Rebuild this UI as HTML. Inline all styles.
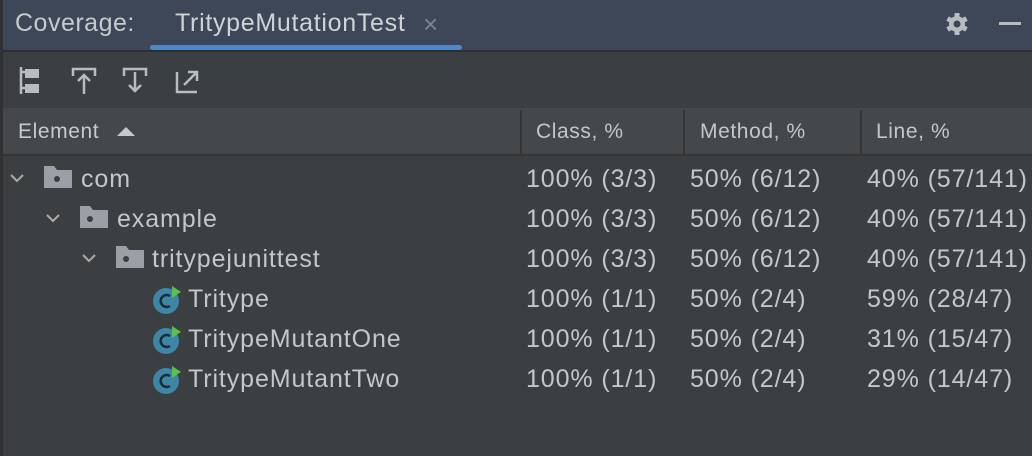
<!DOCTYPE html>
<html><head><style>
*{margin:0;padding:0;box-sizing:border-box}
body{width:1032px;height:456px;background:#3c3f41;font-family:"Liberation Sans",sans-serif;color:#c4c7c9;position:relative;overflow:hidden}
.top{position:absolute;left:0;top:0;width:1032px;height:50px;background:#3d4758}
.abs{position:absolute;white-space:nowrap}
.tb{position:absolute;left:0;top:52px;width:1032px;height:56px;background:#3c3f41}
.hd{position:absolute;left:0;top:108px;width:1032px;height:48px;background:#45484a;border-bottom:2px solid #343638}
.sep{position:absolute;top:110px;width:2px;height:44px;background:#323436}
.row{position:absolute;left:0;height:40px;width:1032px;font-size:25px;letter-spacing:0.9px;line-height:40px}
.row span{position:absolute}
.lb{position:absolute;left:0;top:0;width:3px;height:456px;background:#2f3133}
.h{font-size:21px;letter-spacing:0.6px}
</style></head><body>
<div class="top"></div>
<div class="abs" style="left:15px;top:9px;font-size:25px;letter-spacing:0.5px;color:#c7cacd">Coverage:</div>
<div class="abs" style="left:175px;top:9px;font-size:25px;letter-spacing:0.7px;color:#d0d3d6">TritypeMutationTest</div>
<div class="abs" style="left:423px;top:9px;font-size:26px;color:#7c8390">×</div>
<div class="abs" style="left:150px;top:45px;width:312px;height:5px;border-radius:3px;background:#4d88c9"></div>
<div class="abs" style="left:0;top:50px;width:1032px;height:2px;background:#2d2f31"></div>
<svg class="abs" style="left:944px;top:11px" width="26" height="26" viewBox="0 0 26 26"><g fill="#b8bcc0"><circle cx="13" cy="13" r="8"/><g stroke="#b8bcc0" stroke-width="5"><line x1="13" y1="2" x2="13" y2="24"/><line x1="3.5" y1="7.5" x2="22.5" y2="18.5"/><line x1="3.5" y1="18.5" x2="22.5" y2="7.5"/></g></g><circle cx="13" cy="13" r="3.5" fill="#3d4758"/></svg>
<div class="abs" style="left:999px;top:22px;width:22px;height:3px;background:#b8bcc0"></div>
<div class="tb"></div>
<svg class="abs" style="left:18px;top:66px" width="190" height="30" viewBox="0 0 190 30" fill="none" stroke="#b8bcc0" stroke-width="2.5">
<line x1="3" y1="1" x2="3" y2="28"/><path d="M3 6h6M3 22h6" /><rect x="7" y="3" width="14" height="9" fill="#b8bcc0" stroke="none"/><rect x="7" y="18" width="14" height="9" fill="#b8bcc0" stroke="none"/>
<path d="M55 10V3h22v7M66 28V9M60 15l6-6 6 6"/>
<path d="M106 10V3h22v7M117 6v19M111 19l6 6 6-6"/>
<path d="M159 6v20h20M166 19l12-12M170 6h9v9"/>
</svg>
<div class="hd"></div>
<div class="sep" style="left:520px"></div><div class="sep" style="left:683px"></div><div class="sep" style="left:860px"></div>
<div class="abs h" style="left:18px;top:120px;color:#c7cacd">Element</div>
<svg class="abs" style="left:117px;top:125px" width="18" height="12"><path d="M0 11L9 2L18 11Z" fill="#c7cacd"/></svg>
<div class="abs h" style="left:536px;top:120px">Class, %</div>
<div class="abs h" style="left:700px;top:120px">Method, %</div>
<div class="abs h" style="left:876px;top:120px">Line, %</div>

<div class="row" style="top:159px"><svg style="position:absolute;left:9px;top:14px" width="16" height="12"><path d="M2 2l6 6 6-6" stroke="#aaa" stroke-width="2" fill="none"/></svg><svg style="position:absolute;left:44px;top:7px" width="28" height="22"><path d="M0 0h10l3 4h15v18H0z" fill="#9aa0a6"/><circle cx="13" cy="13" r="3" fill="#3c3f41"/></svg><span style="left:81px">com</span><span style="left:526px">100% (3/3)</span><span style="left:690px">50% (6/12)</span><span style="left:867px">40% (57/141)</span></div>
<div class="row" style="top:199px"><svg style="position:absolute;left:45px;top:14px" width="16" height="12"><path d="M2 2l6 6 6-6" stroke="#aaa" stroke-width="2" fill="none"/></svg><svg style="position:absolute;left:80px;top:7px" width="28" height="22"><path d="M0 0h10l3 4h15v18H0z" fill="#9aa0a6"/><circle cx="10" cy="13" r="3" fill="#3c3f41"/></svg><span style="left:117px">example</span><span style="left:526px">100% (3/3)</span><span style="left:690px">50% (6/12)</span><span style="left:867px">40% (57/141)</span></div>
<div class="row" style="top:239px"><svg style="position:absolute;left:81px;top:14px" width="16" height="12"><path d="M2 2l6 6 6-6" stroke="#aaa" stroke-width="2" fill="none"/></svg><svg style="position:absolute;left:116px;top:7px" width="28" height="22"><path d="M0 0h10l3 4h15v18H0z" fill="#9aa0a6"/><circle cx="10" cy="13" r="3" fill="#3c3f41"/></svg><span style="left:152px">tritypejunittest</span><span style="left:526px">100% (3/3)</span><span style="left:690px">50% (6/12)</span><span style="left:867px">40% (57/141)</span></div>

<div class="row" style="top:279px"><svg style="position:absolute;left:152px;top:5px" width="32" height="32"><circle cx="14" cy="17" r="13" fill="#3e86a8"/><path d="M18 12a6 6 0 1 0 0 10" stroke="#1e2b33" stroke-width="2.5" fill="none"/><path d="M20 2v12l9-6z" fill="#5cc04a"/></svg><span style="left:188px">Tritype</span><span style="left:526px">100% (1/1)</span><span style="left:690px">50% (2/4)</span><span style="left:867px">59% (28/47)</span></div>
<div class="row" style="top:319px"><svg style="position:absolute;left:152px;top:5px" width="32" height="32"><circle cx="14" cy="17" r="13" fill="#3e86a8"/><path d="M18 12a6 6 0 1 0 0 10" stroke="#1e2b33" stroke-width="2.5" fill="none"/><path d="M20 2v12l9-6z" fill="#5cc04a"/></svg><span style="left:188px">TritypeMutantOne</span><span style="left:526px">100% (1/1)</span><span style="left:690px">50% (2/4)</span><span style="left:867px">31% (15/47)</span></div>
<div class="row" style="top:359px"><svg style="position:absolute;left:152px;top:5px" width="32" height="32"><circle cx="14" cy="17" r="13" fill="#3e86a8"/><path d="M18 12a6 6 0 1 0 0 10" stroke="#1e2b33" stroke-width="2.5" fill="none"/><path d="M20 2v12l9-6z" fill="#5cc04a"/></svg><span style="left:188px">TritypeMutantTwo</span><span style="left:526px">100% (1/1)</span><span style="left:690px">50% (2/4)</span><span style="left:867px">29% (14/47)</span></div>
<div class="lb"></div>
</body></html>
